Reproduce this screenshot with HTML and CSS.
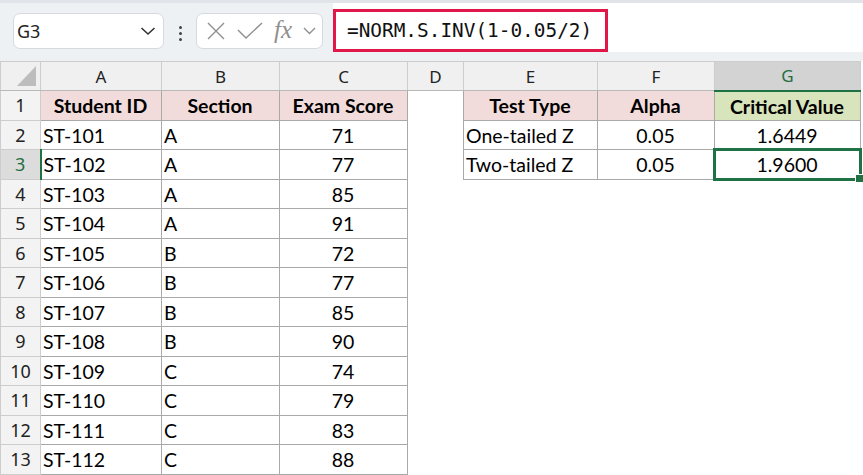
FILE: index.html
```html
<!DOCTYPE html>
<html lang="en">
<head>
  <meta charset="UTF-8">
  <title>NORM.S.INV critical values</title>
  <link rel="stylesheet" href="styles.css">
</head>
<body>
  <div class="toolbar">
    <div class="namebox">
      <span>G3</span>
      <svg width="16" height="10" viewBox="0 0 16 10"><path d="M1.5 2 L8 8 L14.5 2" fill="none" stroke="#333" stroke-width="1.6"/></svg>
    </div>
    <div class="dots"><i></i><i></i><i></i></div>
    <div class="fxbox">
      <svg width="20" height="20" viewBox="0 0 20 20"><path d="M2 2 L18 18 M18 2 L2 18" stroke="#8f8f8f" stroke-width="1.4" fill="none"/></svg>
      <svg width="26" height="18" viewBox="0 0 26 18"><path d="M1 8 L9 16 L25 1" stroke="#8f8f8f" stroke-width="1.4" fill="none"/></svg>
      <span class="fx">fx</span>
      <svg width="13" height="8" viewBox="0 0 13 8"><path d="M1 1 L6.5 6.5 L12 1" stroke="#8f8f8f" stroke-width="1.4" fill="none"/></svg>
    </div>
    <div class="formula">
      <div class="formula-text">=NORM.S.INV(1-0.05/2)</div>
    </div>
  </div>

  <table class="sheet">
    <colgroup>
      <col style="width:40px"><col style="width:121px"><col style="width:118px"><col style="width:128px">
      <col style="width:56px"><col style="width:134px"><col style="width:117px"><col style="width:146px">
    </colgroup>
    <tr class="cols">
      <th class="corner"><svg width="40" height="28" viewBox="0 0 40 28"><polygon points="16,24 35,24 35,4" fill="#bdbdbd"/></svg></th>
      <th>A</th><th>B</th><th>C</th><th>D</th><th>E</th><th>F</th><th class="on">G</th>
    </tr>
    <tr>
      <th class="rh">1</th>
      <td class="d hd">Student ID</td><td class="d hd">Section</td><td class="d hd">Exam Score</td>
      <td></td>
      <td class="d hd">Test Type</td><td class="d hd">Alpha</td><td class="d hd crit">Critical Value</td>
    </tr>
    <tr>
      <th class="rh">2</th>
      <td class="d">ST-101</td><td class="d">A</td><td class="d c">71</td>
      <td></td>
      <td class="d">One-tailed Z</td><td class="d c">0.05</td><td class="d c">1.6449</td>
    </tr>
    <tr>
      <th class="rh on">3</th>
      <td class="d">ST-102</td><td class="d">A</td><td class="d c">77</td>
      <td></td>
      <td class="d">Two-tailed Z</td><td class="d c">0.05</td><td class="d c sel">1.9600</td>
    </tr>
    <tr><th class="rh">4</th><td class="d">ST-103</td><td class="d">A</td><td class="d c">85</td><td></td><td></td><td></td><td></td></tr>
    <tr><th class="rh">5</th><td class="d">ST-104</td><td class="d">A</td><td class="d c">91</td><td></td><td></td><td></td><td></td></tr>
    <tr><th class="rh">6</th><td class="d">ST-105</td><td class="d">B</td><td class="d c">72</td><td></td><td></td><td></td><td></td></tr>
    <tr><th class="rh">7</th><td class="d">ST-106</td><td class="d">B</td><td class="d c">77</td><td></td><td></td><td></td><td></td></tr>
    <tr><th class="rh">8</th><td class="d">ST-107</td><td class="d">B</td><td class="d c">85</td><td></td><td></td><td></td><td></td></tr>
    <tr><th class="rh">9</th><td class="d">ST-108</td><td class="d">B</td><td class="d c">90</td><td></td><td></td><td></td><td></td></tr>
    <tr><th class="rh">10</th><td class="d">ST-109</td><td class="d">C</td><td class="d c">74</td><td></td><td></td><td></td><td></td></tr>
    <tr><th class="rh">11</th><td class="d">ST-110</td><td class="d">C</td><td class="d c">79</td><td></td><td></td><td></td><td></td></tr>
    <tr><th class="rh">12</th><td class="d">ST-111</td><td class="d">C</td><td class="d c">83</td><td></td><td></td><td></td><td></td></tr>
    <tr><th class="rh">13</th><td class="d">ST-112</td><td class="d">C</td><td class="d c">88</td><td></td><td></td><td></td><td></td></tr>
  </table>
</body>
</html>
```

FILE: styles.css
```css
* {
  margin: 0;
  padding: 0;
  box-sizing: border-box;
}

body {
  width: 863px;
  height: 475px;
  overflow: hidden;
  background: #fff;
  font-family: "Lato", "Noto Sans", sans-serif;
}

/* formula bar */
.toolbar {
  height: 61px;
  display: flex;
  align-items: flex-start;
  background: #eef1f4;
  border-top: 3px solid #e1e4e8;
}

.namebox,
.fxbox {
  margin-top: 10px;
  height: 36px;
  display: flex;
  align-items: center;
  background: #fff;
  border: 1px solid #d6d9dd;
  border-radius: 7px;
}

.namebox {
  margin-left: 13px;
  width: 151px;
  justify-content: space-between;
  padding: 0 7px 0 3px;
  font-family: "Noto Sans", sans-serif;
  font-size: 18px;
  color: #222;
}

.dots {
  width: 32px;
  margin-top: 23px;
  display: flex;
  flex-direction: column;
  align-items: center;
  gap: 3px;
}

.dots i {
  display: block;
  width: 3px;
  height: 3px;
  border-radius: 50%;
  background: #444;
}

.fxbox {
  width: 127px;
  padding: 0 6px 0 9px;
  justify-content: space-between;
}

.fx {
  font-family: "Liberation Serif", serif;
  font-style: italic;
  font-size: 25px;
  color: #8f8f8f;
  margin-top: -3px;
}

.formula {
  flex: 1;
  height: 49px;
  margin-left: 10px;
  background: #fff;
}

.formula-text {
  width: 275px;
  height: 43px;
  margin-top: 6px;
  padding-left: 11px;
  border: 3px solid #e0184a;
  font-family: "DejaVu Sans Mono", monospace;
  font-size: 19.4px;
  line-height: 37px;
  color: #111;
}

/* grid */
.sheet {
  table-layout: fixed;
  border-collapse: collapse;
  width: 860px;
}

.sheet td,
.sheet th {
  height: 29.5px;
  white-space: nowrap;
}

.sheet th {
  border: 1px solid #cdcdcd;
  overflow: hidden;
}

.cols th {
  height: 29px;
  background: #f0f0f0;
  border-bottom-color: #b9b9b9;
  font-family: "Noto Sans", sans-serif;
  font-weight: normal;
  font-size: 17px;
  color: #222;
}

.cols th.corner {
  padding: 0;
  vertical-align: top;
}

.cols th.corner svg {
  display: block;
}

.cols th.on {
  background: #d3d3d3;
  color: #1f6e42;
  border-bottom: 2px solid #1f7244;
}

.rh {
  background: #f3f3f3;
  font-family: "Noto Sans", sans-serif;
  font-weight: normal;
  font-size: 18px;
  color: #222;
}

.rh.on {
  background: #dcdcdc;
  color: #1f6e42;
  border-right: 2px solid #1f7244;
}

td {
  padding: 1px 3px 0 2px;
  font-size: 19.5px;
  color: #000;
  border: none;
}

td.d {
  border: 1px solid #a9a9a9;
}

td.c {
  text-align: center;
}

td.hd {
  background: #f2dcdb;
  font-weight: bold;
  text-align: center;
}

td.crit {
  background: #d8e4bc;
}

td.sel {
  position: relative;
}

td.sel::after {
  content: "";
  position: absolute;
  left: -2px;
  top: -2px;
  right: -2px;
  bottom: -2px;
  border: 3px solid #1f7244;
}

td.sel::before {
  content: "";
  position: absolute;
  right: -4px;
  bottom: -4px;
  width: 7px;
  height: 7px;
  background: #1f7244;
  border: 1px solid #fff;
  z-index: 1;
}
```
